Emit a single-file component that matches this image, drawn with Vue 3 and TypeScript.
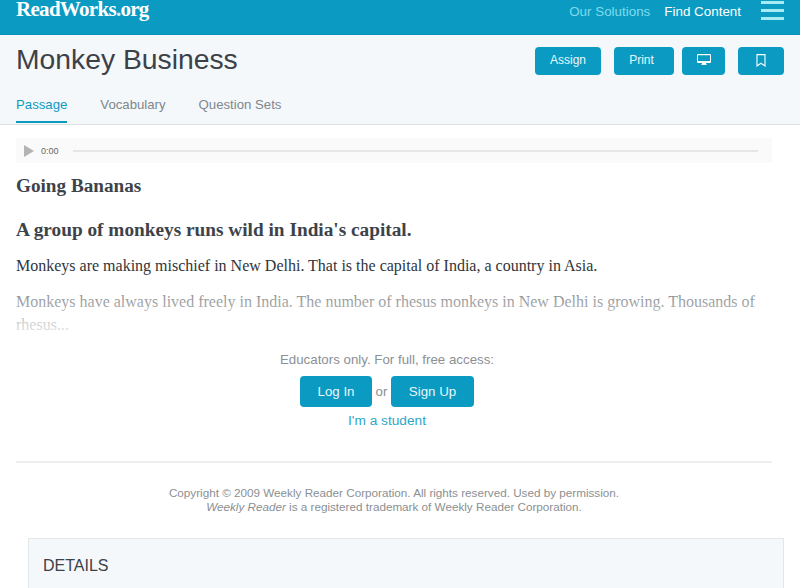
<template>
  <div class="page">
    <header class="topbar">
      <div class="logo">ReadWorks<span class="logo-dot">.</span>org</div>
      <nav class="topnav">
        <a class="muted">Our Solutions</a>
        <a>Find Content</a>
        <div class="burger"><i></i><i></i><i></i></div>
      </nav>
    </header>

    <section class="subhead">
      <div class="title-row">
        <h1>Monkey Business</h1>
        <div class="actions">
          <button class="act assign">Assign</button>
          <button class="act print">Print</button>
          <button class="act screen" aria-label="Present">
            <svg width="14" height="12" viewBox="0 0 14 12">
              <path d="M1 0h12a1 1 0 0 1 1 1v7a1 1 0 0 1-1 1H9v1.5h1V11H4v-.5h1V9H1a1 1 0 0 1-1-1V1a1 1 0 0 1 1-1zm0 1.2V7h12V1.2z" fill="#fff" fill-rule="evenodd" />
            </svg>
          </button>
          <button class="act mark" aria-label="Bookmark">
            <svg width="10" height="13" viewBox="0 0 10 13">
              <path d="M1 .6h8v11.4L5 9.2 1 12z" fill="none" stroke="#fff" stroke-width="1.1" />
            </svg>
          </button>
        </div>
      </div>
      <div class="tabs">
        <a v-for="tab in tabs" :key="tab" class="tab" :class="{ active: tab === 'Passage' }">{{ tab }}</a>
      </div>
    </section>

    <main class="content">
      <div class="player">
        <svg width="10" height="12" viewBox="0 0 10 12"><path d="M0 0l10 6-10 6z" fill="#b4b4b4" /></svg>
        <span class="time">0:00</span>
        <div class="track"></div>
      </div>

      <h2 class="passage-title">Going Bananas</h2>
      <h3 class="passage-sub">A group of monkeys runs wild in India's capital.</h3>
      <p class="para">Monkeys are making mischief in New Delhi. That is the capital of India, a country in Asia.</p>
      <div class="fade-wrap">
        <p class="para">Monkeys have always lived freely in India. The number of rhesus monkeys in New Delhi is growing. Thousands of rhesus...</p>
        <div class="fade"></div>
      </div>

      <div class="gate">
        <div class="gate-text">Educators only. For full, free access:</div>
        <div class="gate-btns">
          <button class="big login">Log In</button>
          <span class="or">or</span>
          <button class="big signup">Sign Up</button>
        </div>
        <a class="student">I'm a student</a>
      </div>

      <hr class="rule" />

      <div class="copy">
        Copyright © 2009 Weekly Reader Corporation. All rights reserved. Used by permission.<br />
        <em>Weekly Reader</em> is a registered trademark of Weekly Reader Corporation.
      </div>

      <div class="details">DETAILS</div>
    </main>
  </div>
</template>

<script setup lang="ts">
const tabs: string[] = ['Passage', 'Vocabulary', 'Question Sets']
</script>

<style>
html, body {
  margin: 0;
  height: 100%;
  overflow: hidden;
  background: #fff;
}
</style>

<style scoped>
.page {
  font-family: "Liberation Sans", Arial, sans-serif;
  width: 800px;
  height: 588px;
  overflow: hidden;
}

.topbar {
  height: 34px;
  background: #0b9ac2;
  border-bottom: 1px solid #0a8fb5;
  display: flex;
  justify-content: space-between;
  padding: 0 16px;
}

.logo {
  font-family: "Liberation Serif", serif;
  font-weight: bold;
  font-size: 21px;
  letter-spacing: -0.7px;
  line-height: 18px;
  color: #fff;
}

.logo-dot {
  color: #d5eef6;
}

.topnav {
  display: flex;
  align-items: flex-start;
  font-size: 13.4px;
  line-height: 23px;
  color: #fff;
  gap: 14px;
}

.muted {
  color: #7fdcec;
}

.burger {
  width: 23px;
  margin-left: 6px;
  display: flex;
  flex-direction: column;
  gap: 5px;
  margin-top: 1px;
}

.burger i {
  display: block;
  height: 3px;
  background: #a5ebf3;
}

.subhead {
  background: #f5f8fa;
  border-bottom: 1px solid #dde2e5;
  height: 90px;
  padding: 0 16px;
  box-sizing: border-box;
}

.title-row {
  display: flex;
  justify-content: space-between;
  align-items: flex-start;
  padding-top: 12px;
  height: 58px;
  box-sizing: border-box;
}

h1 {
  margin: -8px 0 0;
  font-weight: normal;
  font-size: 28.3px;
  line-height: 40px;
  color: #3c4148;
}

.actions {
  display: flex;
  gap: 13px;
}

.act {
  height: 28px;
  border: none;
  border-radius: 4px;
  background: #0b9ac2;
  color: #e8f7fb;
  font-family: inherit;
  font-size: 12px;
  display: flex;
  align-items: center;
  justify-content: center;
  padding: 0 0 2px;
}

.assign { width: 66px; }
.print { width: 60px; padding-right: 5px; }
.screen { width: 43px; margin-left: -5px; }
.mark { width: 46px; }

.tabs {
  display: flex;
  gap: 33px;
}

.tab {
  font-size: 13.2px;
  line-height: 17px;
  color: #7d868d;
  padding: 3px 0 8px;
}

.tab.active {
  color: #0b9ac2;
  border-bottom: 2px solid #0b9ac2;
}

.content {
  padding: 13px 28px 0 16px;
}

.player {
  height: 25px;
  background: #fafafa;
  display: flex;
  align-items: center;
  padding-left: 8px;
  padding-right: 14px;
}

.time {
  font-size: 9px;
  color: #666;
  margin-left: 7px;
}

.track {
  flex: 1;
  height: 2px;
  background: #e6e6e6;
  margin-left: 14px;
}

.passage-title,
.passage-sub,
.para {
  font-family: "Liberation Serif", serif;
}

.passage-title {
  margin: 11px 0 0;
  font-size: 19.2px;
  line-height: 24px;
  color: #3d434a;
}

.passage-sub {
  margin: 20px 0 0;
  font-size: 19.3px;
  line-height: 24px;
  color: #3d434a;
}

.para {
  margin: 0;
  font-size: 16px;
  line-height: 23px;
  color: #30353a;
}

.passage-sub + .para {
  margin-top: 12px;
}

.fade-wrap {
  position: relative;
  margin-top: 13px;
}

.fade {
  position: absolute;
  inset: 0;
  background: linear-gradient(to bottom, rgba(255, 255, 255, 0.4), rgba(255, 255, 255, 0.9));
}

.gate {
  text-align: center;
  margin-top: 14px;
  padding-right: 14px;
}

.gate-text {
  font-size: 13.3px;
  line-height: 20px;
  color: #8b9095;
}

.gate-btns {
  display: flex;
  justify-content: center;
  align-items: center;
  gap: 3px;
  margin-top: 6px;
}

.big {
  height: 31px;
  border: none;
  border-radius: 4px;
  background: #0b9ac2;
  color: #e8f7fb;
  font-family: inherit;
  font-size: 13.3px;
}

.login { width: 72px; }
.signup { width: 83px; }

.or {
  width: 13px;
  font-size: 13.3px;
  color: #8b9095;
}

.student {
  display: block;
  margin-top: 4px;
  font-size: 13.7px;
  line-height: 20px;
  color: #2fa6c6;
}

.rule {
  border: none;
  border-top: 2px solid #eceeef;
  margin: 30px 0 0;
}

.copy {
  margin-top: 23px;
  text-align: center;
  font-size: 11.7px;
  line-height: 14px;
  color: #8b8f93;
}

.details {
  margin: 24px -12px 0 12px;
  height: 80px;
  background: #f5f8fa;
  border: 1px solid #e3e7ea;
  box-sizing: border-box;
  padding: 17px 14px;
  font-size: 16px;
  line-height: 20px;
  color: #3c4148;
}
</style>
